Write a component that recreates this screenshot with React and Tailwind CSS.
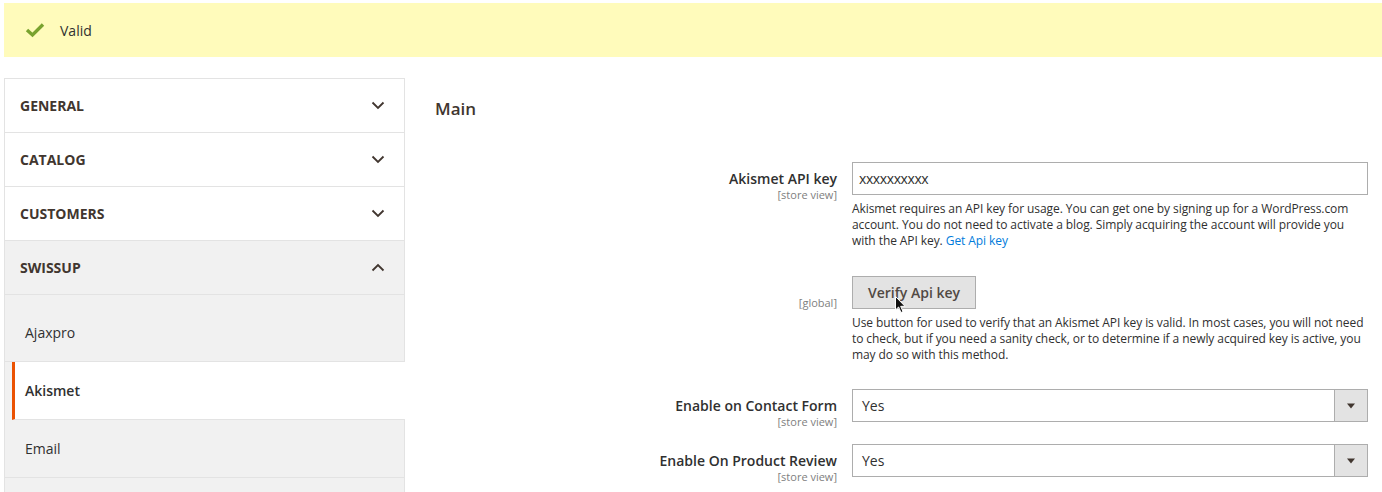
const font = { fontFamily: '"Open Sans", "Liberation Sans", sans-serif' };

const Chevron = ({ up }) => (
  <svg width="14" height="9" viewBox="0 0 14 9" className="text-[#41362f]">
    <polyline
      points={up ? '1.5,7.5 7,2 12.5,7.5' : '1.5,1.5 7,7 12.5,1.5'}
      fill="none"
      stroke="currentColor"
      strokeWidth="1.8"
    />
  </svg>
);

const Section = ({ title, open }) => (
  <div
    className={`h-[54px] flex items-center justify-between pl-[15px] pr-[19px] border-b border-[#e3e3e3] ${
      open ? 'bg-[#f1f1f1]' : 'bg-white'
    }`}
  >
    <span className="text-[14px] font-bold uppercase text-[#41362f]">{title}</span>
    <Chevron up={open} />
  </div>
);

const SubItem = ({ label, active }) =>
  active ? (
    <div className="h-[58px] flex items-center bg-white border-l-[3px] border-[#eb5202] ml-[7px] mr-[-1px] pl-[10px] border-b border-b-[#e3e3e3] relative z-10">
      <span className="text-[14px] font-semibold text-[#303030]">{label}</span>
    </div>
  ) : (
    <div className="h-[58px] flex items-center pl-[20px] border-b border-[#e3e3e3]">
      <span className="text-[14px] text-[#303030]">{label}</span>
    </div>
  );

const Row = ({ label, scope, children, note, className = '' }) => (
  <div className={`flex ${className}`}>
    <div className="w-[417px] shrink-0 text-right pr-[15px] pt-[7px]">
      {label && (
        <div className="text-[14px] font-semibold leading-[19px] text-[#303030]">{label}</div>
      )}
      <div className="text-[11px] leading-[14px] text-[#808080]">{scope}</div>
    </div>
    <div className="w-[516px] shrink-0">
      {children}
      {note && (
        <p className="mt-[6px] text-[12px] leading-[16px] tracking-[-0.08px] text-[#303030]">
          {note}
        </p>
      )}
    </div>
  </div>
);

const Select = () => (
  <div className="h-[33px] flex border border-[#adadad] bg-white">
    <span className="flex-1 pl-[9px] text-[14px] leading-[31px] text-[#303030]">Yes</span>
    <span className="w-[33px] flex items-center justify-center bg-[#e3e3e3] border-l border-[#adadad]">
      <svg width="8" height="6" viewBox="0 0 8 6">
        <polygon points="0,0.5 8,0.5 4,5.5" fill="#41362f" />
      </svg>
    </span>
  </div>
);

export default function App() {
  return (
    <div className="w-[1382px] h-[492px] overflow-hidden bg-white pt-[3px] pl-1" style={font}>
      <div className="h-[54px] bg-[#fffbbb] flex items-center pl-[21px] gap-[15px]">
        <svg width="20" height="16" viewBox="0 0 20 16">
          <polyline
            points="2,8 7.5,13 18,2.5"
            fill="none"
            stroke="#79a22e"
            strokeWidth="3.4"
          />
        </svg>
        <span className="text-[14px] text-[#303030]">Valid</span>
      </div>

      <div className="flex mt-[21px]">
        <div className="w-[401px] shrink-0 border-l border-t border-r border-[#e3e3e3] self-start">
          <Section title="General" />
          <Section title="Catalog" />
          <Section title="Customers" />
          <Section title="Swissup" open />
          <div className="bg-[#f1f1f1] pt-[9px] pb-10">
            <SubItem label="Ajaxpro" />
            <SubItem label="Akismet" active />
            <SubItem label="Email" />
          </div>
        </div>

        <div className="flex-1 pl-[30px]">
          <h2 className="mt-[19px] text-[17px] font-semibold leading-[24px] text-[#41362f]">Main</h2>

          <Row
            className="mt-[41px]"
            label="Akismet API key"
            scope="[store view]"
            note={
              <>
                Akismet requires an API key for usage. You can get one by signing up for a
                WordPress.com account. You do not need to activate a blog. Simply acquiring the
                account will provide you with the API key.{' '}
                <a className="text-[#007bdb]">Get Api key</a>
              </>
            }
          >
            <div className="h-[33px] border border-[#adadad] pl-[6px] text-[14px] leading-[31px] tracking-[-0.4px] text-[#303030]">
              xxxxxxxxxx
            </div>
          </Row>

          <Row
            className="mt-[27px]"
            scope={<div className="pt-[13px]">[global]</div>}
            note="Use button for used to verify that an Akismet API key is valid. In most cases, you will not need to check, but if you need a sanity check, or to determine if a newly acquired key is active, you may do so with this method."
          >
            <div className="relative w-fit">
              <button className="h-[33px] px-[15px] bg-[#e3e3e3] border border-[#adadad] text-[14px] font-semibold text-[#514943]">
                Verify Api key
              </button>
              <svg
                className="absolute left-[43px] top-[20px]"
                width="11"
                height="18"
                viewBox="0 0 11 18"
              >
                <polygon
                  points="0.5,0.5 0.5,14 3.6,11 6,16.5 8,15.6 5.7,10.3 10,10.3"
                  fill="#111"
                  stroke="#fff"
                  strokeWidth="1"
                />
              </svg>
            </div>
          </Row>

          <Row className="mt-[26px]" label="Enable on Contact Form" scope="[store view]">
            <Select />
          </Row>

          <Row className="mt-[15px]" label="Enable On Product Review" scope="[store view]">
            <Select />
          </Row>
        </div>
      </div>
    </div>
  );
}
